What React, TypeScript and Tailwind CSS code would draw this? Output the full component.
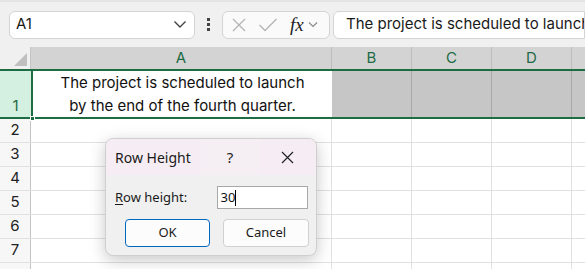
import React from 'react';

const cols = [
  { key: 'B', w: 'w-[80px]' },
  { key: 'C', w: 'w-[80px]' },
  { key: 'D', w: 'w-[80px]' },
];

function Toolbar() {
  return (
    <div className="h-[47px] bg-[#f0f0f0] border-t-2 border-[#e4e4e4] flex items-center pl-[9px] gap-0">
      <div className="w-[186px] h-[28px] bg-white border border-[#d4d4d4] rounded-md flex items-center justify-between pl-[6px] pr-[7px]">
        <span className="text-[15px] text-[#1a1a1a]">A1</span>
        <svg width="14" height="9" viewBox="0 0 14 9" fill="none" stroke="#444" strokeWidth="1.4">
          <path d="M1.5 1.5 L7 7 L12.5 1.5" />
        </svg>
      </div>
      <div className="w-[27px] flex flex-col items-center gap-[2px]">
        <span className="w-[3px] h-[3px] bg-[#444]" />
        <span className="w-[3px] h-[3px] bg-[#444]" />
        <span className="w-[3px] h-[3px] bg-[#444]" />
      </div>
      <div className="w-[108px] h-[28px] bg-[#fafafa] border border-[#d4d4d4] rounded-md flex items-center pl-[8px]">
        <svg width="16" height="16" viewBox="0 0 16 16" stroke="#b4b4b4" strokeWidth="1.3">
          <path d="M2 2 L14 14 M14 2 L2 14" />
        </svg>
        <svg className="ml-[11px]" width="20" height="16" viewBox="0 0 20 16" fill="none" stroke="#b4b4b4" strokeWidth="1.3">
          <path d="M1.5 8 L7 13.5 L18.5 2" />
        </svg>
        <span className="ml-[12px] text-[19px] italic text-[#222] leading-none" style={{ fontFamily: '"Liberation Serif", serif' }}>fx</span>
        <svg className="ml-[4px]" width="10" height="7" viewBox="0 0 10 7" fill="none" stroke="#888" strokeWidth="1.1">
          <path d="M1 1.5 L5 5.5 L9 1.5" />
        </svg>
      </div>
      <div className="ml-[3px] flex-1 min-w-0 h-[28px] bg-white border border-[#d4d4d4] rounded-l-md flex items-center pl-[12px] overflow-hidden whitespace-nowrap">
        <span className="text-[15px] text-[#1a1a1a]">The project is scheduled to launch</span>
      </div>
    </div>
  );
}

function Sheet() {
  const rows = [2, 3, 4, 5, 6, 7];
  return (
    <div className="bg-white">
      {/* column header row */}
      <div className="flex h-[22px] bg-[#d3d3d3]">
        <div className="w-[31px] bg-[#f0f0f0] border-r border-[#c4c4c4] relative">
          <div className="absolute right-[3px] bottom-[3px] w-0 h-0 border-l-[13px] border-l-transparent border-b-[13px] border-b-[#bfbfbf]" />
        </div>
        <div className="w-[301px] border-r border-[#bdbdbd] flex items-center justify-center text-[15px] text-[#1e6a45]">A</div>
        {cols.map((c) => (
          <div key={c.key} className={`${c.w} border-r border-[#bdbdbd] flex items-center justify-center text-[15px] text-[#1e6a45]`}>
            {c.key}
          </div>
        ))}
        <div className="flex-1" />
      </div>
      {/* row 1 */}
      <div className="flex h-[50px] border-y-2 border-[#1e6c42] relative">
        <div className="w-[31px] bg-[#d3f0e0] flex items-end justify-center text-[15px] leading-[22px] text-[#1e6a45]">1</div>
        <div className="w-[301px] border-l-2 border-[#1e6c42] bg-white flex flex-col items-center justify-center text-[15px] leading-[23px] text-[#111]">
          <span>The project is scheduled to launch</span>
          <span>by the end of the fourth quarter.</span>
        </div>
        {cols.map((c) => (
          <div key={c.key} className={`${c.w} bg-[#c6c6c6] border-r border-[#a9a9a9]`} />
        ))}
        <div className="flex-1 bg-[#c6c6c6]" />
        <div className="absolute left-[30px] bottom-[-4px] w-[5px] h-[5px] bg-[#1e6c42] border border-white" />
      </div>
      {rows.map((r) => (
        <div key={r} className="flex h-[24px] border-b border-[#e1e1e1]">
          <div className="w-[31px] bg-[#f7f7f7] border-r border-[#c4c4c4] flex items-center justify-center text-[15px] text-[#222]">{r}</div>
          <div className="w-[301px] border-r border-[#e1e1e1]" />
          {cols.map((c) => (
            <div key={c.key} className={`${c.w} border-r border-[#e1e1e1]`} />
          ))}
          <div className="flex-1" />
        </div>
      ))}
      <div className="flex h-[24px]">
        <div className="w-[31px] bg-[#f7f7f7] border-r border-[#c4c4c4]" />
        <div className="w-[301px] border-r border-[#e1e1e1]" />
        {cols.map((c) => (
          <div key={c.key} className={`${c.w} border-r border-[#e1e1e1]`} />
        ))}
        <div className="flex-1" />
      </div>
    </div>
  );
}

function RowHeightDialog() {
  return (
    <div
      className="absolute left-[105px] top-[138px] w-[212px] h-[118px] rounded-lg border border-[#cfcfcf] bg-[#f0f0f0] shadow-[0_4px_16px_rgba(0,0,0,0.22)] overflow-hidden"
      style={{ fontFamily: '"Noto Sans", "Open Sans", sans-serif' }}
    >
      <div className="h-[36px] flex bg-[#f6edf4]">
        <div className="flex-1 flex items-center pl-[9px] text-[14px] text-[#1a1a1a]">Row Height</div>
        <div className="w-[58px] flex items-center justify-center text-[15px] text-[#222] bg-[#f5eef3]">?</div>
        <div className="w-[57px] flex items-center justify-center">
          <svg width="13" height="13" viewBox="0 0 13 13" stroke="#222" strokeWidth="1.2">
            <path d="M1 1 L12 12 M12 1 L1 12" />
          </svg>
        </div>
      </div>
      <div className="flex items-center pl-[9px] pr-[8px] mt-[11px]">
        <span className="text-[13px] text-[#1a1a1a] w-[103px]">
          <span className="underline underline-offset-2">R</span>ow height:
        </span>
        <div className="w-[91px] h-[23px] bg-white border border-[#a8a8a8] flex items-center pl-[2px] text-[13px] text-[#111]">
          30<span className="w-px h-[16px] bg-black" />
        </div>
      </div>
      <div className="flex gap-[13px] pl-[19px] mt-[10px]">
        <button className="w-[85px] h-[28px] bg-[#fcfcfc] border border-[#0067c0] rounded text-[13px] text-[#1a1a1a]">OK</button>
        <button className="w-[86px] h-[28px] bg-[#fcfcfc] border border-[#d0d0d0] rounded text-[13px] text-[#1a1a1a]">Cancel</button>
      </div>
    </div>
  );
}

export default function App() {
  return (
    <div
      className="relative w-[585px] h-[269px] overflow-hidden bg-white"
      style={{ fontFamily: 'Inter, "Noto Sans", sans-serif' }}
    >
      <Toolbar />
      <Sheet />
      <RowHeightDialog />
    </div>
  );
}
